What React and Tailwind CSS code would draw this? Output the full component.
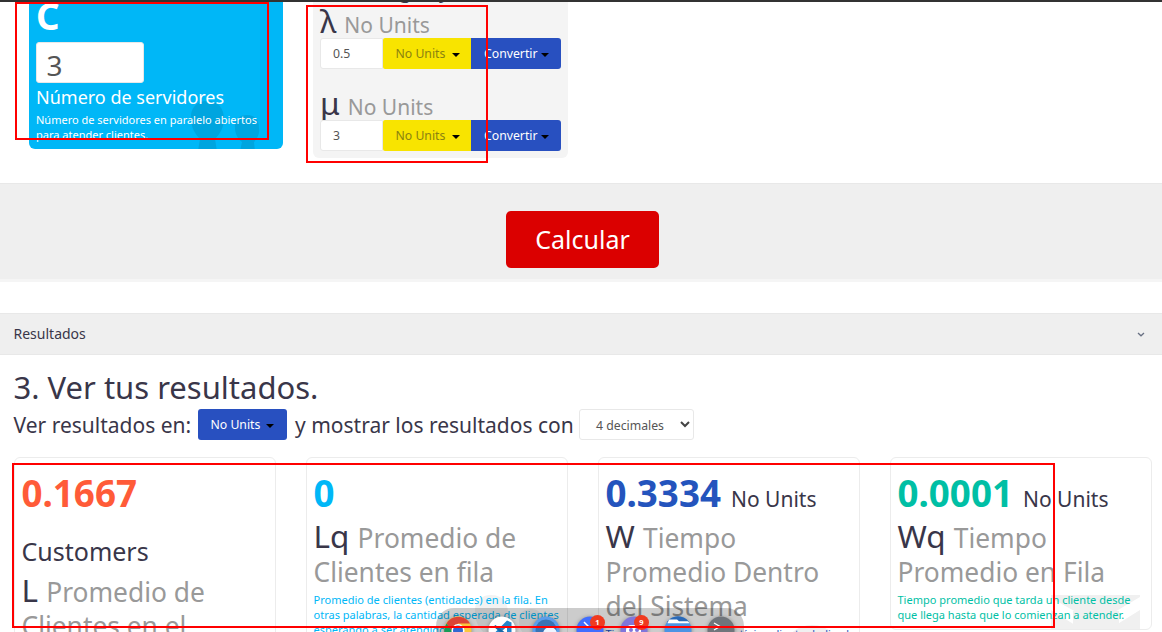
import React from "react";

function Caret({ className = "" }) {
  return (
    <svg width="8" height="4" viewBox="0 0 8 4" className={"shrink-0 " + className}>
      <path d="M0 0h8L4 4z" fill="#000" />
    </svg>
  );
}

function RateField({ symbol, value }) {
  return (
    <div className="h-[82px]">
      <div className="flex h-[34px] items-baseline whitespace-nowrap text-[31.5px] leading-[34px] text-[#393649]">
        <span>{symbol}</span>
        <span className="ml-2 text-[21px] leading-none text-[#999]">No Units</span>
      </div>
      <div className="flex h-[31px] text-[12.25px]">
        <div className="flex w-[63px] items-center rounded-l-[3px] border border-[#e8e8e8] bg-white pl-3 pt-[2px] text-[#555]">{value}</div>
        <div className="flex w-[88px] items-center rounded-l-[2px] bg-[#f8e400] pl-[12.5px] pt-[2px] text-[#8a8210]">
          No Units
          <Caret className="ml-[6.5px] mt-[1px]" />
        </div>
        <div className="flex w-[90px] items-center rounded-r-[3px] bg-[#2850c0] pl-[13px] pt-[2px] text-white">
          Convertir
          <Caret className="ml-[3px] mt-[1px]" />
        </div>
      </div>
    </div>
  );
}

function ResultCard({ value, color, unit, below, symbol, label, text, short, children }) {
  return (
    <div className={"relative w-[262px] shrink-0 overflow-hidden rounded-[6px] border border-[#ececec] px-[6.5px] pt-[8px] " + (short ? "h-[173px]" : "h-[240px]")}>
      {children}
      <div className="relative flex h-[52.5px] items-baseline whitespace-nowrap leading-[54px]">
        <span className={"text-[36.75px] font-bold " + color}>{value}</span>
        {unit && <span className="ml-[10px] text-[21px] text-[#393649]">{unit}</span>}
      </div>
      {below && <div className="h-[54px] pt-[16.5px] text-[25px] leading-[32px] text-[#393649]">{below}</div>}
      <div className="relative text-[31.5px] leading-[34px] text-[#393649]">
        {symbol} <span className="text-[26.35px] leading-none text-[#999]">{label}</span>
      </div>
      <div className={"relative whitespace-nowrap pt-[5.5px] text-[11.03px] leading-[15px] " + color}>
        {text.map((t) => (
          <div key={t}>{t}</div>
        ))}
      </div>
    </div>
  );
}

function People({ className, fill }) {
  return (
    <svg width="70" height="50" viewBox="0 0 70 50" className={className}>
      <g fill={fill}>
        <path d="M16 0C5 0-1 8 0 18c0 8 4 15 9 20l-2 12h19l-2-12c5-5 9-12 9-20C33 8 28 0 16 0z" />
        <path d="M56 14c-8 0-13 5-12 13 0 6 3 11 7 14l-2 9h15l-1-9c3-3 6-8 5-14 0-8-4-13-12-13z" />
      </g>
    </svg>
  );
}

function Dock() {
  return (
    <svg width="308" height="24" viewBox="436 608 308 24" className="absolute left-[436px] top-[608px]">
      <defs>
        <filter id="soft" x="-50%" y="-50%" width="200%" height="200%">
          <feGaussianBlur stdDeviation="2" />
        </filter>
      </defs>
      <path d="M436 632v-6a18 18 0 0 1 18-18h272a18 18 0 0 1 18 18v6z" fill="#000" fillOpacity=".2" />
      <g fill="#000" fillOpacity=".3" filter="url(#soft)">
        {[458, 502, 546, 590, 634, 678, 721].map((x) => (
          <circle key={x} cx={x} cy="631" r="14" />
        ))}
      </g>
      <circle cx="458" cy="630" r="13.5" fill="#fbc73c" />
      <path d="M446.500 623.500a13.500 13.500 0 0 1 23.500 0H458l-6 8z" fill="#dc4437" />
      <path d="M446.500 623.500l6 8 2 2v-1.500 12a13.500 13.500 0 0 1-8-20.500z" fill="#179c58" />
      <circle cx="458" cy="630.5" r="6.500" fill="#fff" />
      <circle cx="458" cy="630.5" r="5" fill="#3268d2" />
      <circle cx="502" cy="630" r="13.5" fill="#fff" />
      <path d="M507 620.500l4.500 2v12h-4.500v-8l-10 9-3-2z" fill="#2484ca" />
      <path d="M493.500 626.500l2-1.500 11.500 9v4z" fill="#176aa9" />
      <circle cx="546" cy="630" r="13.5" fill="#5c9eea" />
      <circle cx="546" cy="630" r="10.5" fill="#3973b5" />
      <circle cx="550" cy="634" r="7" fill="#eef5ff" />
      <circle cx="590" cy="630" r="13.5" fill="#416eff" />
      <path d="M584 622l5 5" fill="none" stroke="#fff" strokeWidth="1.5" />
      <circle cx="634" cy="630" r="13.5" fill="#8076db" />
      <rect x="626" y="625" width="15" height="12" rx="5" fill="#fff" />
      <circle cx="631" cy="630" r="2" fill="#8076db" />
      <circle cx="637" cy="630" r="2" fill="#8076db" />
      <circle cx="678" cy="630" r="13.5" fill="#4c94e4" />
      <path d="M667 622a13.500 13.500 0 0 1 22 0z" fill="#2b69b7" />
      <path d="M669 619.500h8l2 1.800h9l1.500 2h-22z" fill="#fff" />
      <circle cx="721" cy="630" r="13.5" fill="#70757b" />
      <path d="M714 623l6 3.500-6 3.500" fill="none" stroke="#fff" strokeWidth="1.3" />
      <g fill="#f03a20">
        <circle cx="597.500" cy="622.500" r="7.500" />
        <circle cx="641.500" cy="622.500" r="7.500" />
      </g>
      <g fill="#fff" fontSize="7.500" fontWeight="700" textAnchor="middle" fontFamily="Noto Sans, sans-serif">
        <text x="597.500" y="625.200">1</text>
        <text x="641.500" y="625.200">9</text>
      </g>
    </svg>
  );
}

export default function App() {
  return (
    <div className="relative h-[632px] w-[1162px] overflow-hidden bg-white font-['Noto_Sans',sans-serif] text-[#393649]">
      <div className="h-[2px] bg-[#333]" />

      <div className="flex h-[181px] items-start pl-[29px]">
        <div className="relative h-[147px] w-[254px] overflow-hidden rounded-b-[6px] bg-[#00b7f7] px-[7px] text-white">
          <People className="absolute left-[162px] top-[99px]" fill="#00a5df" />
          <div className="relative flex h-10 items-start">
            <div className="-mt-[13px] h-[54px] text-[36.75px] font-bold leading-[54px]">C</div>
          </div>
          <div className="relative flex h-[41px] w-[108px] items-center rounded-[3px] border border-[#e8e8e8] bg-white pl-[9.5px] pt-[5px] text-[28px] leading-none text-[#555]">3</div>
          <div className="relative mt-[1px] h-[26px] whitespace-nowrap text-[18px] leading-[26px]">Número de servidores</div>
          <div className="relative mt-[2px] whitespace-nowrap text-[11px] leading-[15px]">
            <div>Número de servidores en paralelo abiertos</div>
            <div>para atender clientes.</div>
          </div>
        </div>

        <div className="ml-[30px] h-[156px] w-[255px] rounded-b-[6px] bg-[#f4f4f4] px-[7px]">
          <div className="relative h-[2px]">
            <div className="absolute left-0 top-0 h-[4px] w-[200px] overflow-hidden">
              <div className="-mt-[27px] flex h-[30px] text-[21px] leading-[30px]">
                <span className="ml-[79px] w-[40px]">g</span>
                <span>y</span>
              </div>
            </div>
          </div>
          <RateField symbol="λ" value="0.5" />
          <RateField symbol="μ" value="3" />
        </div>
      </div>

      <div className="flex h-[99px] items-start justify-center border-b-[3px] border-t border-b-[#f5f5f5] border-t-[#e8e8e8] bg-[#efefef] pl-[3px] pt-[27px]">
        <div className="flex h-[57px] w-[153px] items-center justify-center rounded-[5px] bg-[#db0000] text-[25px] text-white">Calcular</div>
      </div>

      <div className="mt-[31px] flex h-[42px] items-center justify-between border-y border-[#e8e8e8] bg-[#efefef] pl-[13.5px] pr-[14px] text-[14px]">
        <span className="pb-[2px]">Resultados</span>
        <svg width="8" height="5" viewBox="0 0 8 5" className="mr-[3px]">
          <path d="M1 1l3 2.800L7 1" fill="none" stroke="#687083" strokeWidth="1.300" />
        </svg>
      </div>

      <div className="pl-[14px]">
        <div className="-ml-[0.5px] mb-[1px] mt-[11px] h-[42px] text-[31px] leading-[42px]">3. Ver tus resultados.</div>
        <div className="flex h-[31px] items-center whitespace-nowrap text-[21px] leading-[31px]">
          <span className="-ml-[0.5px] w-[184.5px] pt-[2px]">Ver resultados en:</span>
          <span className="flex h-[31px] w-[89px] items-center rounded-[3px] bg-[#2850c0] pl-[12.5px] text-[12.25px] text-white">
            No Units
            <Caret className="ml-[6px] mt-[3px]" />
          </span>
          <span className="ml-2 w-[284px] pt-[2px]">y mostrar los resultados con</span>
          <span className="flex h-[31px] w-[115px] items-center justify-between rounded-[3px] border border-[#e8e8e8] pl-4 pr-[3px] pt-[1px] text-[12.25px] text-[#555]">
            4 decimales
            <svg width="10" height="7" viewBox="0 0 10 7" className="-mt-[1px]">
              <path d="M1 1l4 4 4-4" fill="none" stroke="#444" strokeWidth="2" />
            </svg>
          </span>
        </div>

        <div className="mt-[17px] flex items-start gap-[30px]">
          <ResultCard value="0.1667" color="text-[#ff5b38]" below="Customers" symbol="L" label={<>Promedio de<br />Clientes en el</>} text={[]} />
          <ResultCard
            value="0"
            color="text-[#00b7f7]"
            symbol="Lq"
            label={<>Promedio de<br />Clientes en fila</>}
            text={["Promedio de clientes (entidades) en la fila. En", "otras palabras, la cantidad esperada de clientes", "esperando a ser atendidos."]}
          >
            <People className="absolute left-[168px] top-[137px]" fill="#f2f2f2" />
          </ResultCard>
          <ResultCard
            value="0.3334"
            color="text-[#2454bd]"
            unit="No Units"
            symbol="W"
            label={<>Tiempo<br />Promedio Dentro<br />del Sistema</>}
            text={["Tiempo promedio que un típico cliente dedicado"]}
          >
            <svg width="62" height="60" viewBox="0 0 62 60" className="absolute left-[182px] top-[167px]">
              <circle cx="31" cy="30" r="26" fill="none" stroke="#f0f0f0" strokeWidth="8" />
            </svg>
          </ResultCard>
          <ResultCard
            value="0.0001"
            color="text-[#00bfa5]"
            unit="No Units"
            symbol="Wq"
            label={<>Tiempo<br />Promedio en Fila</>}
            text={["Tiempo promedio que tarda un cliente desde", "que llega hasta que lo comienzan a atender."]}
            short
          >
            <svg width="90" height="35" viewBox="0 0 90 35" className="absolute left-[160px] top-[137px]">
              <path d="M0 0h89v2L45 28 0 3z" fill="#f0f0f0" />
              <path d="M0 15l32 20H0zM89 15v20H57z" fill="#f0f0f0" />
              <path d="M22 16h46v19H22z" fill="#f0f0f0" />
            </svg>
          </ResultCard>
        </div>
      </div>

      <Dock />
      <div className="absolute left-[15px] top-[2px] h-[138px] w-[254px] border-2 border-[#ff0000]" />
      <div className="absolute left-[306px] top-[5px] h-[158px] w-[182px] border-2 border-[#ff0000]" />
      <div className="absolute left-[12px] top-[463px] h-[165px] w-[1043px] border-2 border-[#ff0000]" />
    </div>
  );
}
